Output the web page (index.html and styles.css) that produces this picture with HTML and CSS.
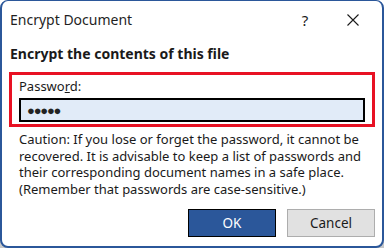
FILE: index.html
```html
<!DOCTYPE html>
<html>
<head>
<meta charset="utf-8">
<link rel="stylesheet" href="styles.css">
</head>
<body>
<div class="dialog">
  <div class="titlebar">
    <span class="title">Encrypt Document</span>
    <span class="help">?</span>
    <span class="close"><svg width="12" height="12" viewBox="0 0 12 12"><path d="M0.5 0.5 L11.5 11.5 M11.5 0.5 L0.5 11.5" stroke="#1a1a1a" stroke-width="1.1" fill="none"/></svg></span>
  </div>
  <div class="content">
    <div class="heading">Encrypt the contents of this file</div>
    <div class="pwgroup">
      <div class="label">Passwo<u>r</u>d:</div>
      <div class="input"><span class="dots">●●●●●</span></div>
    </div>
    <p class="caution">Caution: If you lose or forget the password, it cannot be recovered. It is advisable to keep a list of passwords and their corresponding document names in a safe place. (Remember that passwords are case-sensitive.)</p>
    <div class="buttons">
      <button class="btn ok">OK</button>
      <button class="btn cancel">Cancel</button>
    </div>
  </div>
</div>
</body>
</html>
```
FILE: styles.css
```css
html, body {
  margin: 0;
  padding: 0;
}
body {
  width: 384px;
  height: 248px;
  background: linear-gradient(#ffffff 0, #ffffff 220px, #c8c8c8 220px);
  font-family: "Noto Sans", "Open Sans", sans-serif;
  color: #1a1a1a;
}
.dialog {
  box-sizing: border-box;
  width: 384px;
  height: 248px;
  border: 2px solid #2b579a;
  border-top-width: 1px;
  border-radius: 8px;
  background: #fff;
  display: flex;
  flex-direction: column;
}
.titlebar {
  height: 37px;
  display: flex;
  align-items: center;
  padding-left: 8px;
}
.title {
  font-size: 14px;
  flex: 1;
  color: #1f1f1f;
}
.help {
  font-size: 15px;
  width: 20px;
  margin-right: 32px;
  text-align: center;
}
.close {
  display: flex;
  margin-right: 23px;
}
.content {
  padding: 0 7px 0 7px;
  display: flex;
  flex-direction: column;
}
.heading {
  font-weight: bold;
  font-size: 14px;
  height: 34px;
  line-height: 31px;
  padding-left: 1px;
}
.pwgroup {
  border: 3px solid #e81123;
  padding: 2px 7px 0 7px;
  height: 47px;
}
.label {
  font-size: 13px;
  line-height: 18px;
  height: 21px;
}
.input {
  box-sizing: border-box;
  height: 24px;
  border: 2px solid #000;
  background: #e1ebf8;
  display: flex;
  align-items: center;
  padding-left: 6px;
}
.dots {
  font-size: 13px;
  letter-spacing: -1.2px;
  color: #222;
}
.caution {
  margin: 4px 0 0 10px;
  font-size: 13px;
  line-height: 16.5px;
}
.buttons {
  display: flex;
  justify-content: flex-end;
  gap: 11px;
  margin-top: 12px;
}
.btn {
  box-sizing: border-box;
  width: 88px;
  height: 28px;
  font-family: inherit;
  font-size: 13.5px;
  padding: 0;
}
.ok {
  background: #2b579a;
  color: #fff;
  border: 1px solid #000;
  box-shadow: inset 0 0 0 1px #2b579a;
}
.cancel {
  background: #e1e1e1;
  color: #1a1a1a;
  border: 1px solid #adadad;
}
```
